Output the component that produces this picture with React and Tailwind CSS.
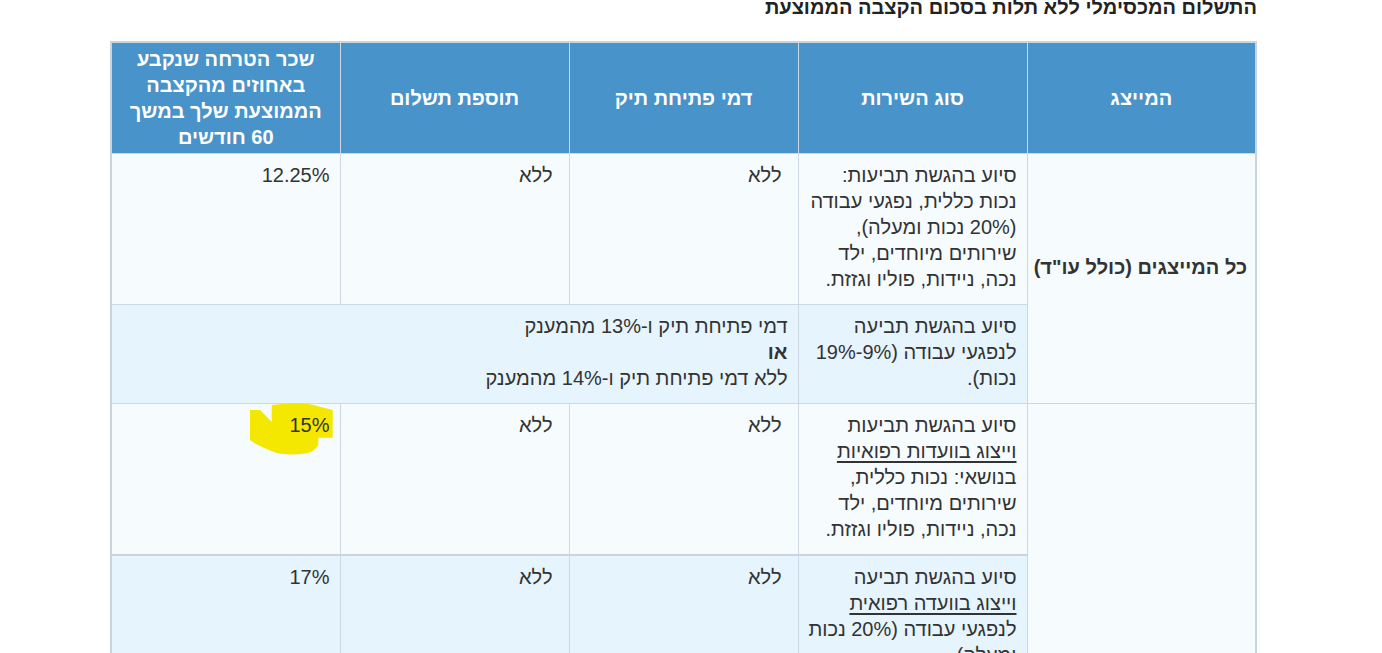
const cell = "border border-[#cdd8e2] px-[10px] pt-[8px] pb-[12px] align-top text-right";
const nil = cell + " !pr-[16px]";
const head = "border border-[#cdd8e2] px-[10px] py-[3px] align-middle text-center font-bold text-white text-[20px]";

function Highlight() {
  return (
    <svg
      className="absolute right-[6px] top-[-1px]"
      width="84"
      height="53"
      viewBox="0 0 84 53"
    >
      <path
        d="M0 7 L10 7 L21.7 18.7 L21.7 2 Q36 0 50 0.3 Q62 1 70 3.7 L82.7 7 L82.7 34.7 L68.3 34.7 L68.3 42 Q64 49 56.7 50.3 Q46 52 36.7 51.3 Q28 51 23.3 48.7 Q8 43 0 37 Z"
        fill="#f5e800"
      />
    </svg>
  );
}

export default function App() {
  return (
    <div
      dir="rtl"
      className="min-h-screen bg-white text-[#333] font-['Liberation_Sans',Arial,sans-serif] text-[20px] leading-[26px]"
    >
      <div className="mr-[125px] w-[1147px]">
        <h2 className="-mt-[6px] font-bold text-[#222] text-[20px] leading-[26px] mb-[21px]">
          התשלום המכסימלי ללא תלות בסכום הקצבה הממוצעת
        </h2>
        <table className="w-full table-fixed border-collapse border-2 border-[#c8d4de]">
          <thead>
            <tr className="bg-[#4893c9] h-[109px]">
              <th className={head}>המייצג</th>
              <th className={head}>סוג השירות</th>
              <th className={head}>דמי פתיחת תיק</th>
              <th className={head}>תוספת תשלום</th>
              <th className={head}>שכר הטרחה שנקבע באחוזים מהקצבה הממוצעת שלך במשך 60 חודשים</th>
            </tr>
          </thead>
          <tbody>
            <tr className="bg-[#f6fbfe]">
              <td rowSpan={2} className={cell + " !align-middle !px-[8px] !pb-[32px] whitespace-nowrap font-bold bg-[#f6fbfe]"}>
                כל המייצגים (כולל עו"ד)
              </td>
              <td className={cell}>
                סיוע בהגשת תביעות: נכות כללית, נפגעי עבודה (20% נכות ומעלה), שירותים מיוחדים, ילד נכה, ניידות, פוליו וגזזת.
              </td>
              <td className={nil}>ללא</td>
              <td className={nil}>ללא</td>
              <td className={cell}>12.25%</td>
            </tr>
            <tr className="bg-[#e6f4fd]">
              <td className={cell}>
                סיוע בהגשת תביעה לנפגעי עבודה (9%-19% נכות).
              </td>
              <td colSpan={3} className={cell}>
                <div>דמי פתיחת תיק ו-13%‏ מהמענק</div>
                <div className="font-bold">או</div>
                <div>ללא דמי פתיחת תיק ו-14%‏ מהמענק</div>
              </td>
            </tr>
            <tr className="bg-[#f6fbfe]">
              <td rowSpan={2} className={cell + " bg-[#f6fbfe]"}></td>
              <td className={cell}>
                סיוע בהגשת תביעות
                <br />
                <span className="underline underline-offset-[3px]">וייצוג בוועדות רפואיות</span>
                <br />
                בנושאי: נכות כללית, שירותים מיוחדים, ילד נכה, ניידות, פוליו וגזזת.
              </td>
              <td className={nil}>ללא</td>
              <td className={nil}>ללא</td>
              <td className={cell + " relative"}>
                <Highlight />
                <span className="relative">15%</span>
              </td>
            </tr>
            <tr className="bg-[#e6f4fd]">
              <td className={cell + " !pl-[4px] border-t-2 border-t-[#c8d4de]"}>
                סיוע בהגשת תביעה
                <br />
                <span className="underline underline-offset-[3px]">וייצוג בוועדה רפואית</span>
                <br />
                לנפגעי עבודה (20% נכות ומעלה)
              </td>
              <td className={nil + " border-t-2 border-t-[#c8d4de]"}>ללא</td>
              <td className={nil + " border-t-2 border-t-[#c8d4de]"}>ללא</td>
              <td className={cell + " border-t-2 border-t-[#c8d4de]"}>17%</td>
            </tr>
          </tbody>
        </table>
      </div>
    </div>
  );
}
